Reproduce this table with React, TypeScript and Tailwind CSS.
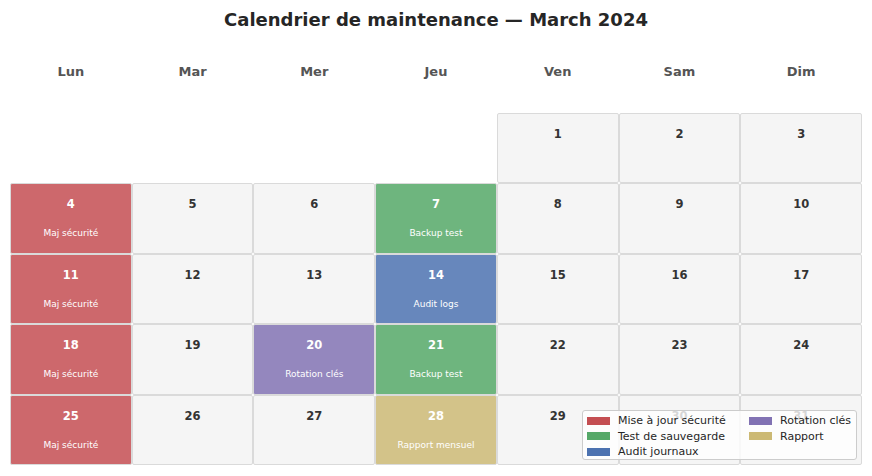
import React from "react";

type Ev = { label: string; bg: string };

const events: Record<number, Ev> = {
  4: { label: "Maj sécurité", bg: "bg-[#cd686c]" },
  11: { label: "Maj sécurité", bg: "bg-[#cd686c]" },
  18: { label: "Maj sécurité", bg: "bg-[#cd686c]" },
  25: { label: "Maj sécurité", bg: "bg-[#cd686c]" },
  7: { label: "Backup test", bg: "bg-[#6eb57e]" },
  21: { label: "Backup test", bg: "bg-[#6eb57e]" },
  14: { label: "Audit logs", bg: "bg-[#6787bc]" },
  20: { label: "Rotation clés", bg: "bg-[#9487be]" },
  28: { label: "Rapport mensuel", bg: "bg-[#d3c389]" },
};

const days = ["Lun", "Mar", "Mer", "Jeu", "Ven", "Sam", "Dim"];

export default function App() {
  const cells: (number | null)[] = [null, null, null, null];
  for (let d = 1; d <= 31; d++) cells.push(d);

  return (
    <div className="relative w-[872px] h-[476px] bg-white font-['DejaVu_Sans',sans-serif] overflow-hidden">
      <div className="h-[36px] pt-[2px] flex items-center justify-center text-[18px] font-bold text-[#262626]">
        Calendrier de maintenance — March 2024
      </div>
      <div className="mx-[10px] h-[70px] grid grid-cols-7 items-center">
        {days.map((d) => (
          <div key={d} className="text-center text-[13px] font-bold text-[#555555] leading-none">
            {d}
          </div>
        ))}
      </div>
      <div className="mx-[10px] mt-[7px] grid grid-cols-7 grid-rows-[repeat(5,70.4px)]">
        {cells.map((d, i) => {
          if (d === null) return <div key={i} />;
          const ev = events[d];
          return (
            <div
              key={i}
              className={`flex flex-col items-center rounded-[2px] border border-[#dadada] ${
                ev ? ev.bg : "bg-[#f5f5f5]"
              }`}
            >
              <div
                className={`pt-[13px] text-[11.5px] font-bold leading-[14px] ${
                  ev ? "text-white" : "text-[#333333]"
                }`}
              >
                {d}
              </div>
              {ev && (
                <div className="mt-[16px] text-[9px] leading-[12px] text-white">{ev.label}</div>
              )}
            </div>
          );
        })}
      </div>
      <div className="absolute left-[582px] top-[410px] w-[275px] h-[50px] rounded-[3px] border border-[#cccccc] bg-white/80 px-[4px] pt-[2px] text-[11px] text-[#262626]">
        <div className="grid grid-cols-[162px_1fr] leading-[15.5px]">
          <LegendItem color="bg-[#c44e52]" label="Mise à jour sécurité" />
          <LegendItem color="bg-[#8172b3]" label="Rotation clés" />
          <LegendItem color="bg-[#55a868]" label="Test de sauvegarde" />
          <LegendItem color="bg-[#ccb974]" label="Rapport" />
          <LegendItem color="bg-[#4c72b0]" label="Audit journaux" />
        </div>
      </div>
    </div>
  );
}

function LegendItem({ color, label }: { color: string; label: string }) {
  return (
    <div className="flex items-center">
      <span className={`inline-block w-[23px] h-[8px] ${color}`} />
      <span className="ml-[8px] whitespace-nowrap">{label}</span>
    </div>
  );
}
